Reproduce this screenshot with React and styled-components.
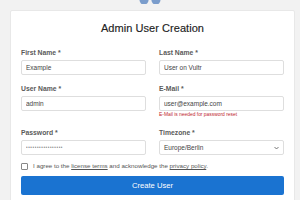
import { createGlobalStyle } from "styled-components";
import styled from "styled-components";

const GlobalStyle = createGlobalStyle`
  html, body {
    margin: 0;
    padding: 0;
    background: #f2f2f2;
    font-family: "Liberation Sans", Arial, sans-serif;
    overflow: hidden;
  }
`;

const Page = styled.div`
  width: 300px;
  height: 200px;
  display: flex;
  flex-direction: column;
  align-items: center;
  overflow: hidden;
`;

const LogoWrap = styled.div`
  flex: none;
  height: 10px;
  display: flex;
  align-items: flex-start;
  justify-content: center;
`;

const Card = styled.div`
  flex: none;
  align-self: flex-start;
  margin-left: 10px;
  width: 285px;
  box-sizing: border-box;
  background: #fff;
  border: 1px solid #e8e8e8;
  border-radius: 2px;
  padding: 10px 10px 12px;
`;

const Title = styled.h1`
  margin: 0 0 14px;
  font-size: 11px;
  line-height: 14px;
  font-weight: 500;
  color: #222;
  text-align: center;
  letter-spacing: 0.05px;
  -webkit-text-stroke: 0.15px #222;
`;

const Grid = styled.div`
  display: grid;
  grid-template-columns: 125px 125px;
  column-gap: 13px;
  row-gap: 10px;
`;

const Field = styled.div`
  display: flex;
  flex-direction: column;
`;

const Label = styled.label`
  font-size: 6.8px;
  line-height: 8px;
  font-weight: 700;
  color: #5a5a5a;
  margin-bottom: 3px;
`;

const Input = styled.input`
  box-sizing: border-box;
  height: 15px;
  width: 100%;
  border: 1px solid #dedede;
  border-radius: 2px;
  padding: 0 4px;
  font-family: inherit;
  font-size: ${(p) => (p.type === "password" ? "4.5px" : "6.5px")};
  color: ${(p) => (p.type === "password" ? "#888" : "#444")};
  background: #fff;
  outline: none;
  letter-spacing: ${(p) => (p.type === "password" ? "0.6px" : "0")};
`;

const SelectBox = styled.div`
  box-sizing: border-box;
  height: 15px;
  border: 1px solid #dedede;
  border-radius: 2px;
  padding: 0 4px;
  display: flex;
  align-items: center;
  justify-content: space-between;
  font-size: 6.5px;
  color: #444;
`;

const ErrorText = styled.div`
  margin-top: 0;
  font-size: 4.9px;
  line-height: 8px;
  color: #c0262d;
`;

const AgreeRow = styled.label`
  display: flex;
  align-items: center;
  gap: 5px;
  margin-top: 7px;
  font-size: 6.2px;
  line-height: 8px;
  color: #555;
`;

const Check = styled.span`
  width: 5px;
  height: 5px;
  border: 1px solid #888;
  border-radius: 1px;
  background: #fff;
  flex: none;
`;

const TextLink = styled.a`
  color: #555;
  text-decoration: underline;
`;

const Button = styled.button`
  display: block;
  width: 100%;
  height: 19px;
  margin-top: 6px;
  border: none;
  border-radius: 2px;
  background: #1a73d1;
  color: #fff;
  font-family: inherit;
  font-size: 7.6px;
  font-weight: 500;
`;

const Logo = () => (
  <svg width="24" height="4" viewBox="0 0 24 4">
    <path d="M2 0 L10 0 Q11 0 10.5 1 L9.5 3 Q9 4 8 4 L4 4 Q3 4 2.6 3 L1.6 1 Q1.2 0 2 0 Z" fill="#7b9dcc" />
    <path d="M14 0 L22 0 Q22.8 0 22.4 1 L21.4 3 Q21 4 20 4 L16 4 Q15 4 14.5 3 L13.5 1 Q13 0 14 0 Z" fill="#7b9dcc" />
  </svg>
);

const Chevron = () => (
  <svg width="5" height="4" viewBox="0 0 10 6">
    <path d="M1 1 L5 5 L9 1" fill="none" stroke="#555" strokeWidth="1.6" />
  </svg>
);

export default function App() {
  return (
    <>
      <GlobalStyle />
      <Page>
        <LogoWrap>
          <Logo />
        </LogoWrap>
        <Card>
          <Title>Admin User Creation</Title>
          <Grid>
            <Field>
              <Label>First Name *</Label>
              <Input defaultValue="Example" />
            </Field>
            <Field>
              <Label>Last Name *</Label>
              <Input defaultValue="User on Vultr" />
            </Field>
            <Field>
              <Label>User Name *</Label>
              <Input defaultValue="admin" />
            </Field>
            <Field>
              <Label>E-Mail *</Label>
              <Input defaultValue="user@example.com" />
              <ErrorText>E-Mail is needed for password reset</ErrorText>
            </Field>
            <Field>
              <Label>Password *</Label>
              <Input type="password" defaultValue="supersecretpass12" />
            </Field>
            <Field>
              <Label>Timezone *</Label>
              <SelectBox>
                <span>Europe/Berlin</span>
                <Chevron />
              </SelectBox>
            </Field>
          </Grid>
          <AgreeRow>
            <Check />
            <span>
              I agree to the <TextLink>license terms</TextLink> and acknowledge the{" "}
              <TextLink>privacy policy</TextLink>.
            </span>
          </AgreeRow>
          <Button>Create User</Button>
        </Card>
      </Page>
    </>
  );
}
